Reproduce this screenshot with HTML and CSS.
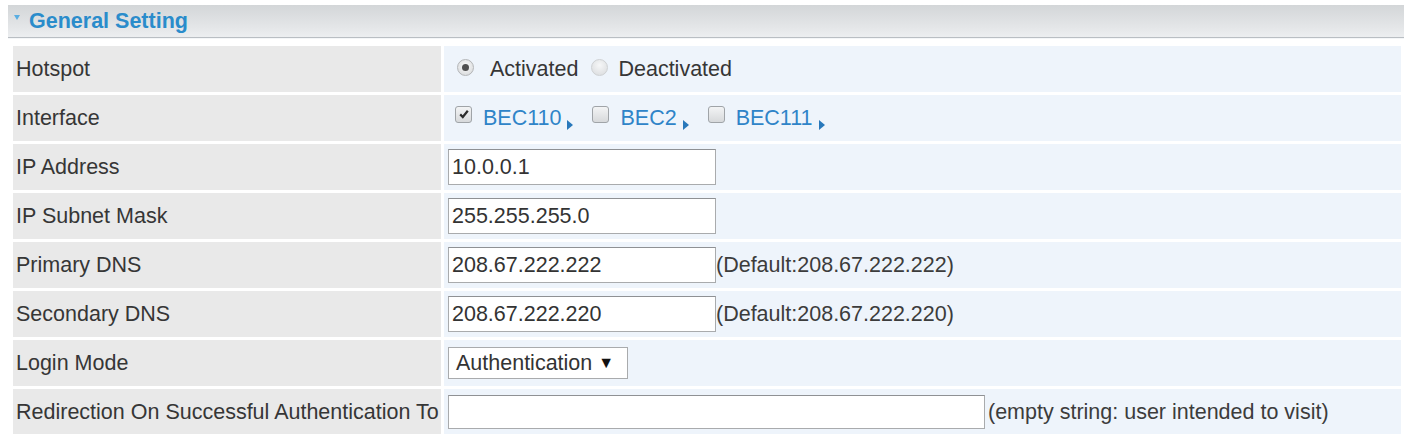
FILE: index.html
```html
<!DOCTYPE html>
<html>
<head>
<meta charset="utf-8">
<link rel="stylesheet" href="styles.css">
</head>
<body>
<div class="panel">
  <div class="panel-head"><span class="caret"></span><span class="title">General Setting</span></div>
  <div class="form-grid">
    <div class="lbl">Hotspot</div>
    <div class="val">
      <span class="radio on"></span><span class="opt">Activated</span>
      <span class="radio off"></span><span class="opt">Deactivated</span>
    </div>

    <div class="lbl">Interface</div>
    <div class="val">
      <span class="check on"><svg viewBox="0 0 12 12" width="12" height="12"><path d="M2.2 6.4 L4.8 9 L9.8 2.8" fill="none" stroke="#2b2b2b" stroke-width="2.2"/></svg></span><a class="link">BEC110</a><span class="arrow"></span>
      <span class="check"></span><a class="link">BEC2</a><span class="arrow"></span>
      <span class="check"></span><a class="link">BEC111</a><span class="arrow"></span>
    </div>

    <div class="lbl">IP Address</div>
    <div class="val"><span class="input">10.0.0.1</span></div>

    <div class="lbl">IP Subnet Mask</div>
    <div class="val"><span class="input">255.255.255.0</span></div>

    <div class="lbl">Primary DNS</div>
    <div class="val"><span class="input">208.67.222.222</span><span class="hint">(Default:208.67.222.222)</span></div>

    <div class="lbl">Secondary DNS</div>
    <div class="val"><span class="input">208.67.222.220</span><span class="hint">(Default:208.67.222.220)</span></div>

    <div class="lbl">Login Mode</div>
    <div class="val"><span class="select">Authentication <span class="sel-arrow">▼</span></span></div>

    <div class="lbl">Redirection On Successful Authentication To</div>
    <div class="val"><span class="input wide"></span><span class="hint far">(empty string: user intended to visit)</span></div>
  </div>
</div>
</body>
</html>
```

FILE: styles.css
```css
html, body {
  margin: 0;
  padding: 0;
  background: #ffffff;
}

body {
  font-family: "Liberation Sans", Arial, sans-serif;
  font-size: 21.5px;
  color: #363636;
}

.panel {
  margin: 5px 2px 0 8px;
}

.panel-head {
  height: 32px;
  display: flex;
  align-items: center;
  background: linear-gradient(#d3d6d8, #e3e5e7 65%, #eceef0);
  border-bottom: 1px solid #b9bec3;
  box-shadow: 0 1px 0 #f4f6f8;
}

.caret {
  width: 0;
  height: 0;
  margin: 0 9px 8px 6px;
  border-left: 3.5px solid transparent;
  border-right: 3.5px solid transparent;
  border-top: 5px solid #5aaee2;
}

.title {
  font-weight: bold;
  color: #2a8ccb;
  font-size: 21.5px;
  margin-top: 1px;
}

.form-grid {
  margin-top: 8px;
  padding-left: 5px;
  display: grid;
  grid-template-columns: 428px 957px;
  grid-auto-rows: 46px;
  gap: 3px;
}

.lbl {
  background: #e9e9e9;
  padding-left: 3px;
  display: flex;
  align-items: center;
  white-space: nowrap;
}

.val {
  background: #eef4fb;
  padding-left: 4px;
  display: flex;
  align-items: center;
  white-space: nowrap;
}

.radio {
  width: 17px;
  height: 17px;
  border-radius: 50%;
  box-sizing: border-box;
  border: 1px solid #b4b6b8;
  background: radial-gradient(circle at 50% 40%, #fbfbfb, #d3d5d7);
  position: relative;
  margin-left: 9px;
  margin-right: 16px;
  margin-top: -4px;
  flex: none;
}

.radio.off {
  margin-left: 13px;
  margin-right: 10px;
  background: radial-gradient(circle at 50% 35%, #f6f7f8, #d8dadc);
  border-color: #cfd1d3;
}

.radio.on::after {
  content: "";
  position: absolute;
  left: 4px;
  top: 4px;
  width: 7px;
  height: 7px;
  border-radius: 50%;
  background: #505050;
}

.opt {
  color: #363636;
}

.check {
  width: 17px;
  height: 17px;
  box-sizing: border-box;
  border: 1px solid #a0a4a8;
  border-radius: 3px;
  background: linear-gradient(#f3f4f5, #d7d9db);
  display: inline-flex;
  align-items: center;
  justify-content: center;
  margin-left: 7px;
  margin-right: 11px;
  margin-top: -8px;
  flex: none;
}

.link {
  color: #2f84c8;
  cursor: pointer;
}

.arrow {
  width: 0;
  height: 0;
  border-top: 5px solid transparent;
  border-bottom: 5px solid transparent;
  border-left: 6px solid #2878bb;
  margin-left: 6px;
  margin-top: 14px;
  margin-right: 12px;
}

.input {
  width: 268px;
  height: 36px;
  box-sizing: border-box;
  border: 1px solid #a9abad;
  border-top-color: #8f9194;
  background: #ffffff;
  padding: 0 3px;
  display: flex;
  align-items: center;
  color: #333333;
}

.input.wide {
  width: 537px;
  height: 34px;
}

.hint {
  margin-left: 0;
  color: #3c3c3c;
}

.hint.far {
  margin-left: 3px;
}

.select {
  width: 180px;
  height: 32px;
  box-sizing: border-box;
  border: 1px solid #a9abad;
  background: #ffffff;
  padding-left: 7px;
  display: flex;
  align-items: center;
  color: #333333;
}

.sel-arrow {
  font-size: 16px;
  margin-left: 6px;
  color: #111111;
}
```
